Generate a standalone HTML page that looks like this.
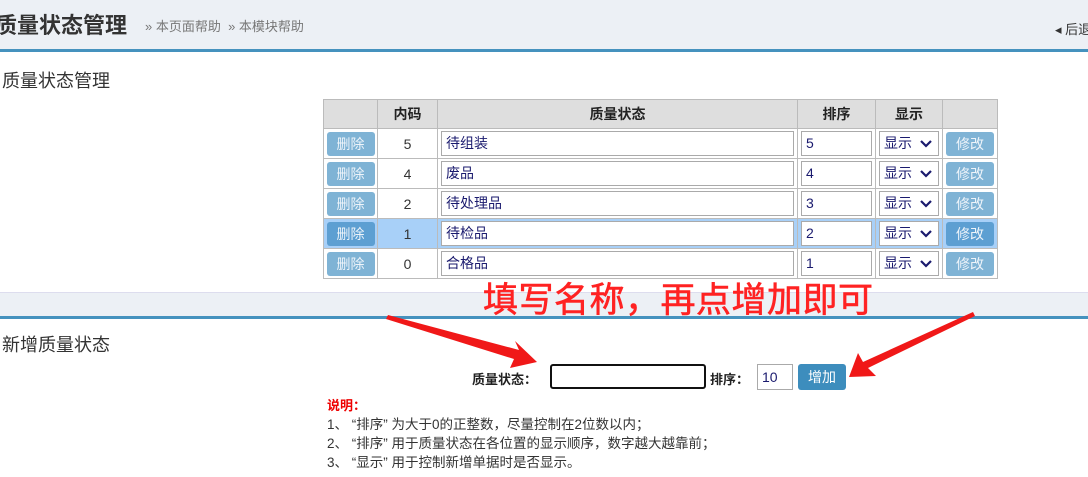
<!DOCTYPE html>
<html><head><meta charset="utf-8"><style>
*{margin:0;padding:0;box-sizing:border-box}
body{width:1088px;height:477px;overflow:hidden;background:#fff;font-family:"Liberation Sans","Noto Sans CJK SC",sans-serif;position:relative;color:#333}
.a{position:absolute;white-space:nowrap}
.hdr{left:0;top:0;width:1088px;height:52px;background:#ecf0f5;border-bottom:3px solid #4592be}
table{position:absolute;left:323px;top:99px;border-collapse:collapse;font-size:14px}
td,th{border:1px solid #bbb;height:30px;padding:0;text-align:center}
th{background:#dedede;font-weight:bold;color:#222;height:29px}
.btn{display:inline-block;width:48px;height:24px;line-height:24px;background:#7fb3d5;color:#eef4fa;border-radius:3px;font-size:14px}
.inp{display:block;height:25px;border:1px solid #aaa;margin:0 3px;text-align:left;line-height:23px;padding-left:4px;color:#1a1a6e;font-size:14px}
.sel{display:block;height:25px;border:1px solid #aaa;margin:0 3px;text-align:left;line-height:23px;padding-left:4px;color:#1a1a6e;font-size:14px;position:relative}
.sel svg{position:absolute;right:6px;top:8px}
tr.hl td{background:#a8d0f8}
tr.hl .btn{background:#5d9fd2}
.note{font-size:13.5px;color:#333;left:327px}
</style></head><body>
<div class="a hdr"></div>
<div class="a" style="left:-5px;top:8px;font-size:22px;font-weight:bold;color:#333">质量状态管理</div>
<div class="a" style="left:145px;top:16px;font-size:13px;color:#777">» 本页面帮助 &nbsp;» 本模块帮助</div>
<div class="a" style="left:1055px;top:19px;font-size:13px;color:#333">◂ 后退</div>
<div class="a" style="left:2px;top:67px;font-size:18px;color:#333">质量状态管理</div>
<table>
<tr><th style="width:54px"></th><th style="width:60px">内码</th><th style="width:360px">质量状态</th><th style="width:78px">排序</th><th style="width:67px">显示</th><th style="width:55px"></th></tr>
<tr><td><span class="btn">删除</span></td><td>5</td><td><span class="inp">待组装</span></td><td><span class="inp">5</span></td><td><span class="sel">显示<svg width="12" height="8"><path d="M1 1L6 6L11 1" stroke="#1a1a6e" stroke-width="2.2" fill="none"/></svg></span></td><td><span class="btn">修改</span></td></tr>
<tr><td><span class="btn">删除</span></td><td>4</td><td><span class="inp">废品</span></td><td><span class="inp">4</span></td><td><span class="sel">显示<svg width="12" height="8"><path d="M1 1L6 6L11 1" stroke="#1a1a6e" stroke-width="2.2" fill="none"/></svg></span></td><td><span class="btn">修改</span></td></tr>
<tr><td><span class="btn">删除</span></td><td>2</td><td><span class="inp">待处理品</span></td><td><span class="inp">3</span></td><td><span class="sel">显示<svg width="12" height="8"><path d="M1 1L6 6L11 1" stroke="#1a1a6e" stroke-width="2.2" fill="none"/></svg></span></td><td><span class="btn">修改</span></td></tr>
<tr class="hl"><td><span class="btn">删除</span></td><td>1</td><td><span class="inp" style="background:#fff">待检品</span></td><td><span class="inp" style="background:#fff">2</span></td><td><span class="sel" style="background:#fff">显示<svg width="12" height="8"><path d="M1 1L6 6L11 1" stroke="#1a1a6e" stroke-width="2.2" fill="none"/></svg></span></td><td><span class="btn">修改</span></td></tr>
<tr><td><span class="btn">删除</span></td><td>0</td><td><span class="inp">合格品</span></td><td><span class="inp">1</span></td><td><span class="sel">显示<svg width="12" height="8"><path d="M1 1L6 6L11 1" stroke="#1a1a6e" stroke-width="2.2" fill="none"/></svg></span></td><td><span class="btn">修改</span></td></tr>
</table>
<div class="a" style="left:0;top:292px;width:1088px;height:27px;background:#ecf0f5;border-top:1px solid #dde;border-bottom:3px solid #4592be"></div>
<div class="a" style="left:2px;top:331px;font-size:18px;color:#333">新增质量状态</div>
<div class="a" style="left:472px;top:369px;font-size:13px;font-weight:bold;color:#222">质量状态：</div>
<div class="a" style="left:550px;top:364px;width:156px;height:25px;border:2px solid #111;border-radius:3px"></div>
<div class="a" style="left:710px;top:369px;font-size:13px;font-weight:bold;color:#222">排序：</div>
<div class="a" style="left:757px;top:364px;width:36px;height:26px;border:1px solid #aaa;font-size:14px;color:#1a1a6e;padding-left:4px;line-height:24px">10</div>
<div class="a" style="left:798px;top:364px;width:48px;height:26px;background:#3d8dbd;border-radius:3px;color:#fff;font-size:14px;text-align:center;line-height:26px">增加</div>
<div class="a" style="left:327px;top:395px;font-size:13px;font-weight:bold;color:#e00">说明：</div>
<div class="a note" style="top:413px">1、 “排序” 为大于0的正整数，尽量控制在2位数以内；</div>
<div class="a note" style="top:432px">2、 “排序” 用于质量状态在各位置的显示顺序，数字越大越靠前；</div>
<div class="a note" style="top:451px">3、 “显示” 用于控制新增单据时是否显示。</div>
<div class="a" style="left:483px;top:272px;font-size:35px;color:#f22;letter-spacing:0.5px;-webkit-text-stroke:0.6px #f22">填写名称，再点增加即可</div>
<svg class="a" style="left:0;top:0" width="1088" height="477">
<polygon points="388,315 519,350 515,341 537,362 510,368 514,359 386,319" fill="#f01818"/>
<polygon points="973,312 863,362 858,353 849,377 876,376 868,368 975,316" fill="#f01818"/>
</svg>
</body></html>
